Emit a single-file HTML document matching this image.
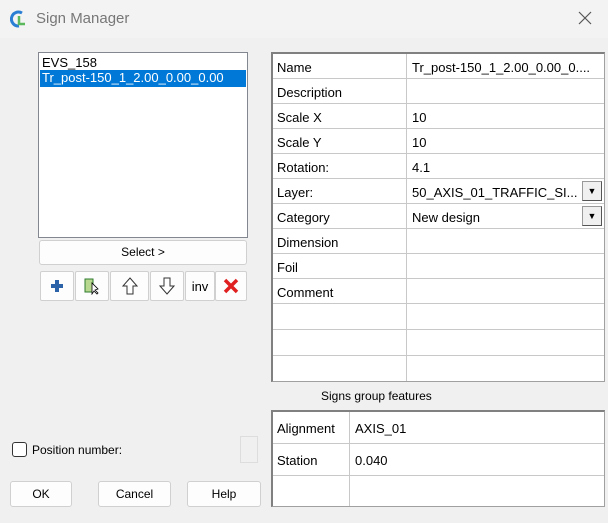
<html><head><style>
body{margin:0;width:608px;height:523px;background:#f0f0f0;font-family:"Liberation Sans",sans-serif;font-size:13px;color:#000;position:relative;overflow:hidden}
.a{position:absolute}
.btn{position:absolute;background:#fdfdfd;border:1px solid #d0d0d0;border-radius:3px;box-sizing:border-box;text-align:center;font-size:12px}
.tb{position:absolute;top:271px;height:30px;background:#fdfdfd;border:1px solid #d0d0d0;border-radius:2px;box-sizing:border-box;display:flex;align-items:center;justify-content:center}
.tbl{position:absolute;background:#fff;border:1px solid #a0a0a0;border-left:2px solid #808080;border-top:2px solid #808080;box-sizing:border-box}
.row{position:absolute;left:0;right:0;border-bottom:1px solid #c8c8c8;box-sizing:border-box}
.c1{position:absolute;left:4px;top:0}
.c2{position:absolute;left:139px;top:0}
.vl{position:absolute;left:133px;top:0;bottom:0;width:1px;background:#c8c8c8}
.dd{position:absolute;right:2px;width:20px;height:20px;background:#f0f0f0;border:1px solid #999;border-right-color:#555;border-bottom-color:#555;box-sizing:border-box;font-size:9px;text-align:center;line-height:18px}
</style></head><body>
<div class="a" style="left:0;top:0;width:608px;height:38px;background:#f3f3f3"></div>
<svg class="a" style="left:10px;top:9px" width="18" height="20" viewBox="0 0 18 20"><path d="M12 4 A7 7 0 1 0 9 17" fill="none" stroke="#2a7fd4" stroke-width="3"/><path d="M9 7 L9 15 L15 15" fill="none" stroke="#5cb85c" stroke-width="2.5"/></svg>
<div class="a" style="left:36px;top:10px;font-size:15px;color:#777">Sign Manager</div>
<svg class="a" style="left:578px;top:11px" width="14" height="14"><path d="M1 1L13 13M13 1L1 13" stroke="#555" stroke-width="1.2"/></svg>

<div class="a" style="left:38px;top:52px;width:210px;height:186px;background:#fff;border:1px solid #828790;box-sizing:border-box"></div>
<div class="a" style="left:42px;top:55px">EVS_158</div>
<div class="a" style="left:40px;top:70px;width:206px;height:17px;background:#0078d7;color:#fff;line-height:16px;padding-left:2px;box-sizing:border-box">Tr_post-150_1_2.00_0.00_0.00</div>
<div class="btn" style="left:39px;top:240px;width:208px;height:25px;line-height:23px">Select &gt;</div>

<div class="tb" style="left:40px;width:34px"><svg width="14" height="14"><path d="M7 1V13M1 7H13" stroke="#2b62a8" stroke-width="4"/></svg></div>
<div class="tb" style="left:75px;width:34px"><svg width="16" height="18"><rect x="1" y="2" width="8" height="13" fill="#b8d890" stroke="#2d7a2d"/><path d="M8 6 L8 17 L10 14 L13 17 L14 16 L11 13 L14 12Z" fill="#fff" stroke="#000" stroke-width=".8"/></svg></div>
<div class="tb" style="left:110px;width:39px"><svg width="16" height="18"><path d="M8 1 L15 9 L11 9 L11 17 L5 17 L5 9 L1 9Z" fill="#fff" stroke="#333"/></svg></div>
<div class="tb" style="left:150px;width:34px"><svg width="16" height="18"><path d="M8 17 L15 9 L11 9 L11 1 L5 1 L5 9 L1 9Z" fill="#fff" stroke="#333"/></svg></div>
<div class="tb" style="left:185px;width:30px;font-size:13px">inv</div>
<div class="tb" style="left:215px;width:32px"><svg width="16" height="16"><path d="M2 2L14 14M14 2L2 14" stroke="#e02020" stroke-width="3.5"/></svg></div>

<div class="tbl" style="left:271px;top:52px;width:334px;height:330px">
<div class="vl"></div>
<div class="row" style="top:0;height:25px"><span class="c1" style="top:6px">Name</span><span class="c2" style="top:6px">Tr_post-150_1_2.00_0.00_0....</span></div>
<div class="row" style="top:25px;height:25px"><span class="c1" style="top:6px">Description</span></div>
<div class="row" style="top:50px;height:25px"><span class="c1" style="top:6px">Scale X</span><span class="c2" style="top:6px">10</span></div>
<div class="row" style="top:75px;height:25px"><span class="c1" style="top:6px">Scale Y</span><span class="c2" style="top:6px">10</span></div>
<div class="row" style="top:100px;height:25px"><span class="c1" style="top:6px">Rotation:</span><span class="c2" style="top:6px">4.1</span></div>
<div class="row" style="top:125px;height:25px"><span class="c1" style="top:6px">Layer:</span><span class="c2" style="top:6px">50_AXIS_01_TRAFFIC_SI...</span><div class="dd" style="top:2px">▼</div></div>
<div class="row" style="top:150px;height:25px"><span class="c1" style="top:6px">Category</span><span class="c2" style="top:6px">New design</span><div class="dd" style="top:2px">▼</div></div>
<div class="row" style="top:175px;height:25px"><span class="c1" style="top:6px">Dimension</span></div>
<div class="row" style="top:200px;height:25px"><span class="c1" style="top:6px">Foil</span></div>
<div class="row" style="top:225px;height:25px"><span class="c1" style="top:6px">Comment</span></div>
<div class="row" style="top:250px;height:26px"></div>
<div class="row" style="top:276px;height:26px"></div>
</div>

<div class="a" style="left:321px;top:389px;font-size:12px">Signs group features</div>
<div class="tbl" style="left:271px;top:410px;width:334px;height:97px">
<div class="vl" style="left:76px"></div>
<div class="row" style="top:0;height:32px"><span class="c1" style="top:9px">Alignment</span><span class="c2" style="left:82px;top:9px">AXIS_01</span></div>
<div class="row" style="top:32px;height:32px"><span class="c1" style="top:9px">Station</span><span class="c2" style="left:82px;top:9px">0.040</span></div>
</div>

<div class="a" style="left:12px;top:442px;width:13px;height:13px;border:1px solid #333;border-radius:3px;background:#fff"></div>
<div class="a" style="left:32px;top:443px;font-size:12px">Position number:</div>
<div class="a" style="left:240px;top:436px;width:18px;height:27px;border:1px solid #ddd;box-sizing:border-box"></div>

<div class="btn" style="left:10px;top:481px;width:62px;height:26px;line-height:24px">OK</div>
<div class="btn" style="left:98px;top:481px;width:73px;height:26px;line-height:24px">Cancel</div>
<div class="btn" style="left:187px;top:481px;width:74px;height:26px;line-height:24px">Help</div>
</body></html>
